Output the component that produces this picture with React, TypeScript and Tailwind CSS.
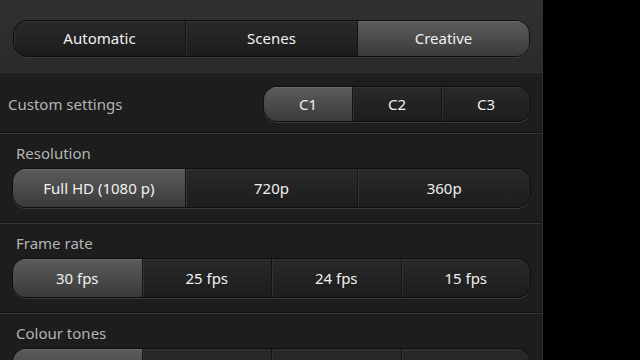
import React from "react";

type SegProps = {
  items: string[];
  selected: number;
  className?: string;
  height: string;
};

const Segmented = ({ items, selected, className = "", height }: SegProps) => {
  return (
    <div
      className={`flex shrink-0 ${height} rounded-[14px] border border-[#0e0e0e] bg-gradient-to-b from-[#2a2a2a] to-[#1c1c1c] shadow-[0_1px_0_#3a3a3a] overflow-hidden ${className}`}
    >
      {items.map((item, i) => (
        <div
          key={i}
          className={`flex-1 flex items-center justify-center text-[15px] text-[#f0f0f0] ${
            i > 0 ? "border-l border-[#141414]" : ""
          } ${
            i === selected
              ? "bg-gradient-to-b from-[#5c5c5c] to-[#3a3a3a] shadow-[inset_0_1px_0_#6a6a6a]"
              : "shadow-[inset_1px_1px_0_#333333]"
          }`}
        >
          {item}
        </div>
      ))}
    </div>
  );
};

const Section = ({
  label,
  children,
}: {
  label: string;
  children?: React.ReactNode;
}) => (
  <div className="h-[90px] shrink-0 border-t border-[#383838] shadow-[0_-1px_0_#141414] px-[12px] pt-[7px]">
    <div className="text-[15px] text-[#b4b4b4] pl-[4px] h-[27px] leading-[24px]">{label}</div>
    {children}
  </div>
);

export default function App() {
  return (
    <div
      className="w-[640px] h-[360px] flex bg-black overflow-hidden"
      style={{ fontFamily: '"Noto Sans", "Open Sans", sans-serif' }}
    >
      <div className="w-[543px] h-full shrink-0 bg-[#1d1d1d] border-r border-[#2e2e2e] flex flex-col overflow-hidden">
        <div className="h-[74px] shrink-0 bg-gradient-to-b from-[#313131] to-[#2a2a2a] px-[13px] pt-[20px]">
          <Segmented
            items={["Automatic", "Scenes", "Creative"]}
            selected={2}
            height="h-[37px]"
            className="w-[517px]"
          />
        </div>
        <div className="h-[59px] shrink-0 border-t border-[#141414] shadow-[inset_0_1px_0_#262626] flex items-center justify-between pl-[8px] pr-[11px]">
          <span className="text-[15px] text-[#b4b4b4]">Custom settings</span>
          <Segmented
            items={["C1", "C2", "C3"]}
            selected={0}
            height="h-[36px]"
            className="w-[268px]"
          />
        </div>
        <Section label="Resolution">
          <Segmented
            items={["Full HD (1080 p)", "720p", "360p"]}
            selected={0}
            height="h-[40px]"
            className="w-[519px]"
          />
        </Section>
        <Section label="Frame rate">
          <Segmented
            items={["30 fps", "25 fps", "24 fps", "15 fps"]}
            selected={0}
            height="h-[40px]"
            className="w-[519px]"
          />
        </Section>
        <Section label="Colour tones">
          <Segmented
            items={["", "", "", ""]}
            selected={0}
            height="h-[40px]"
            className="w-[519px]"
          />
        </Section>
      </div>
      <div className="flex-1" />
    </div>
  );
}
